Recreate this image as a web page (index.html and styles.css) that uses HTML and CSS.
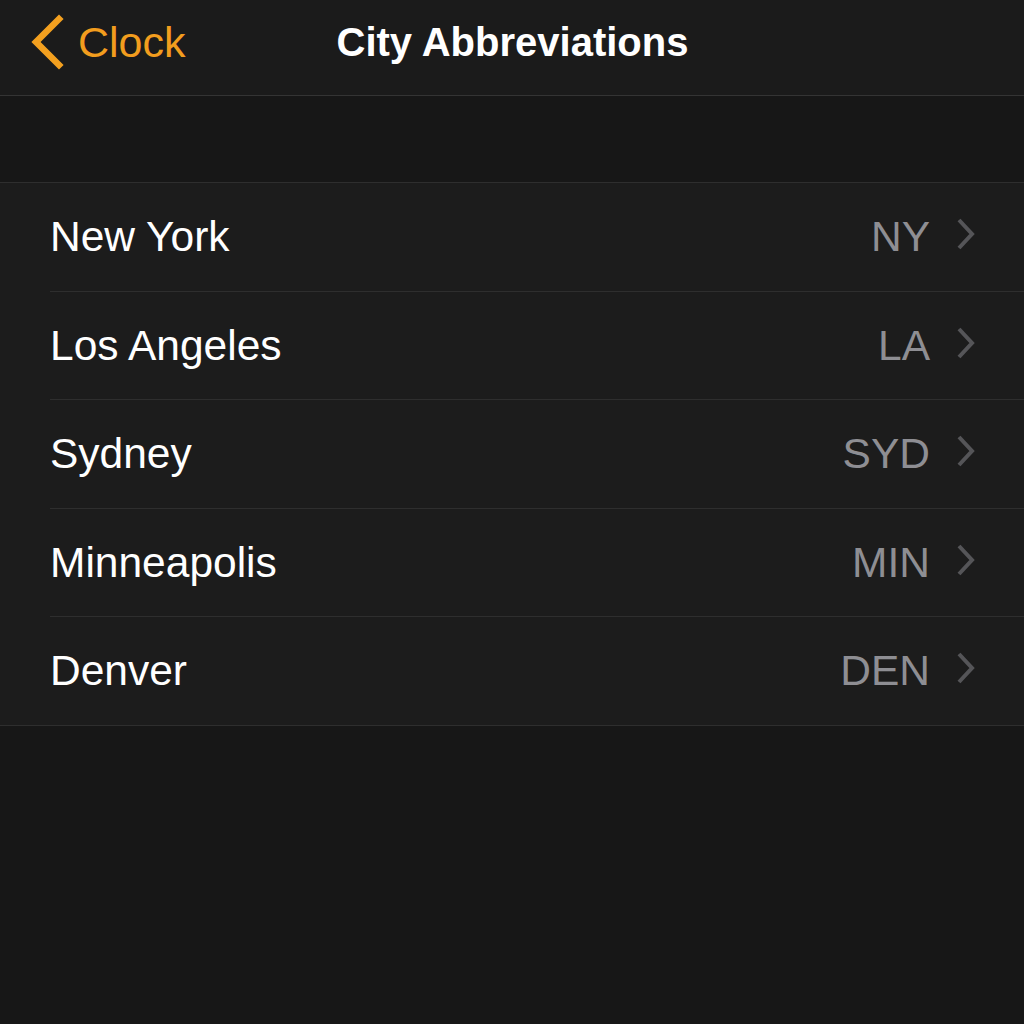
FILE: index.html
```html
<!DOCTYPE html>
<html>
<head>
<meta charset="utf-8">
<link rel="stylesheet" href="styles.css">
</head>
<body>
<div class="nav">
  <div class="back">
    <svg class="back-icon" width="36" height="56" viewBox="0 0 36 56"><polyline points="31,5 8,28 31,51" fill="none" stroke="#f3a01f" stroke-width="6.5" stroke-linecap="square" stroke-linejoin="miter"/></svg>
    <span class="back-label">Clock</span>
  </div>
  <div class="title">City Abbreviations</div>
</div>
<div class="spacer"></div>
<div class="list">
  <div class="row"><div class="row-inner"><span class="name">New York</span><span class="abbr">NY</span><svg class="chev" width="20" height="34" viewBox="0 0 20 34"><polyline points="3,3 16,17 3,31" fill="none" stroke="#555558" stroke-width="4"/></svg></div></div>
  <div class="row"><div class="row-inner"><span class="name">Los Angeles</span><span class="abbr">LA</span><svg class="chev" width="20" height="34" viewBox="0 0 20 34"><polyline points="3,3 16,17 3,31" fill="none" stroke="#555558" stroke-width="4"/></svg></div></div>
  <div class="row"><div class="row-inner"><span class="name">Sydney</span><span class="abbr">SYD</span><svg class="chev" width="20" height="34" viewBox="0 0 20 34"><polyline points="3,3 16,17 3,31" fill="none" stroke="#555558" stroke-width="4"/></svg></div></div>
  <div class="row"><div class="row-inner"><span class="name">Minneapolis</span><span class="abbr">MIN</span><svg class="chev" width="20" height="34" viewBox="0 0 20 34"><polyline points="3,3 16,17 3,31" fill="none" stroke="#555558" stroke-width="4"/></svg></div></div>
  <div class="row"><div class="row-inner last"><span class="name">Denver</span><span class="abbr">DEN</span><svg class="chev" width="20" height="34" viewBox="0 0 20 34"><polyline points="3,3 16,17 3,31" fill="none" stroke="#555558" stroke-width="4"/></svg></div></div>
</div>
</body>
</html>
```
FILE: styles.css
```css
html, body {
  margin: 0;
  padding: 0;
  background: #171717;
  font-family: "Liberation Sans", Arial, sans-serif;
  width: 1024px;
  height: 1024px;
  overflow: hidden;
}
.nav {
  height: 95px;
  background: #1b1b1b;
  border-bottom: 1px solid #343434;
  display: flex;
  align-items: center;
  position: relative;
}
.back {
  display: flex;
  align-items: center;
  padding-left: 28px;
  height: 100%;
  margin-top: -11px;
}
.back-icon {
  display: block;
}
.back-label {
  color: #f29d1e;
  font-size: 43px;
  margin-left: 14px;
  line-height: 1;
}
.title {
  position: absolute;
  left: 0;
  right: 0;
  top: 18px;
  text-align: center;
  color: #ffffff;
  font-weight: bold;
  font-size: 40px;
  line-height: 48px;
  padding-left: 1px;
}
.spacer {
  height: 86px;
  border-bottom: 1px solid #2e2e2e;
}
.list {
  background: #1c1c1c;
  border-bottom: 1px solid #2e2e2e;
}
.row {
  padding-left: 50px;
}
.row-inner {
  height: 107.5px;
  display: flex;
  align-items: center;
  border-bottom: 1px solid #2e2e2e;
  padding-right: 48px;
}
.row-inner.last {
  border-bottom: none;
}
.name {
  flex: 1;
  color: #ffffff;
  font-size: 42.5px;
  line-height: 1;
  margin-top: 1px;
}
.abbr {
  color: #8e8e93;
  font-size: 42.5px;
  line-height: 1;
  margin-right: 26px;
  margin-top: 1px;
}
.chev {
  display: block;
  margin-top: -5px;
}
```
